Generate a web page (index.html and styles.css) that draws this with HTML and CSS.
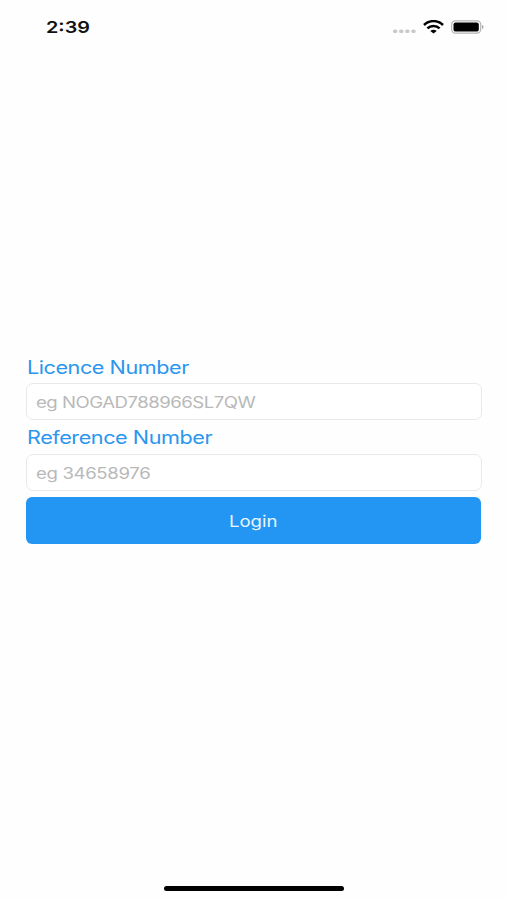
FILE: index.html
```html
<!DOCTYPE html>
<html lang="en">
<head>
<meta charset="utf-8">
<title>Login</title>
<link rel="stylesheet" href="styles.css">
</head>
<body>
<div class="screen">
  <header class="status">
    <span class="time wide">2:39</span>
    <div class="indicators">
      <svg class="dots" width="23" height="5" viewBox="0 0 23 5" fill="#c9c9c9"><rect x="0" y=".5" width="4.3" height="3.6" rx="1.6"/><rect x="6.1" y=".5" width="4.3" height="3.6" rx="1.6"/><rect x="12.2" y=".5" width="4.3" height="3.6" rx="1.6"/><rect x="18.3" y=".5" width="4.3" height="3.6" rx="1.6"/></svg>
      <svg class="wifi" width="21" height="14" viewBox="0 0 21 14" fill="none" stroke="#000" stroke-width="2.5"><path d="M1 5C6.2-.2 14.8-.2 20 5"/><path d="M4.4 8.4c3.3-3.2 8.9-3.2 12.2 0"/><path d="M7.3 10.9c1.8-1.7 4.6-1.7 6.4 0L10.5 13.6z" fill="#000" stroke="none"/></svg>
      <svg class="battery" width="33" height="14" viewBox="0 0 33 14"><rect x=".7" y=".8" width="29" height="12.4" rx="3.6" fill="#fff" stroke="#b4b4b4" stroke-width="1.2"/><rect x="2.5" y="2.4" width="25.3" height="9.2" rx="2.2"/><path d="M31 5c2 .5 2 3.5 0 4z" fill="#aaa"/></svg>
    </div>
  </header>
  <main class="form">
    <label class="label"><span class="wide">Licence Number</span></label>
    <div class="field"><span class="wide hint">eg NOGAD788966SL7QW</span></div>
    <label class="label second"><span class="wide">Reference Number</span></label>
    <div class="field"><span class="wide hint digits">eg 34658976</span></div>
    <button class="login"><span class="wide caption">Login</span></button>
  </main>
  <footer class="home"><div class="bar"></div></footer>
</div>
</body>
</html>
```
FILE: styles.css
```css
* { box-sizing: border-box; }
body {
  margin: 0;
  background: #fefefe;
  font-family: Inter, "Liberation Sans", sans-serif;
}
.screen {
  width: 507px;
  height: 900px;
  display: flex;
  flex-direction: column;
  overflow: hidden;
}
.wide {
  display: inline-block;
  white-space: nowrap;
  transform: scaleX(1.2);
  transform-origin: left center;
}
.status {
  height: 54px;
  display: flex;
  justify-content: space-between;
  padding: 0 23px 1px 46px;
  align-items: center;
}
.time {
  font-size: 16.5px;
  font-weight: 600;
  color: #111;
}
.indicators {
  display: flex;
  align-items: center;
}
.dots { margin: 9px 7px 0 0; }
.wifi { margin-right: 7px; }
.form {
  flex: 1;
  padding: 300px 25px 0 26px;
}
.label {
  display: block;
  height: 29px;
  padding-left: 1px;
  font-size: 18px;
  line-height: 27px;
  letter-spacing: -0.37px;
  color: #2b96ee;
}
.second { height: 34px; line-height: 35px; }
.field {
  height: 37px;
  border: 1.5px solid #e9e9e9;
  border-radius: 7px;
  padding-left: 9px;
  background: #fff;
  font-size: 15.5px;
  line-height: 37px;
  color: #b9b9b9;
}
.hint { letter-spacing: -0.42px; }
.digits { letter-spacing: -0.3px; }
.login {
  display: block;
  width: 455px;
  height: 47px;
  margin: 6px 0 0 0;
  padding: 2px 0 0;
  border: 0;
  border-radius: 6px;
  background: #2396f3;
  color: #e9f6ff;
  font: 15.5px Inter, "Liberation Sans", sans-serif;
  line-height: 45px;
}
.caption { transform-origin: center; }
.home {
  height: 14px;
  padding-left: 164px;
}
.bar {
  width: 180px;
  height: 5px;
  border-radius: 3px;
  background: #000;
}
```
